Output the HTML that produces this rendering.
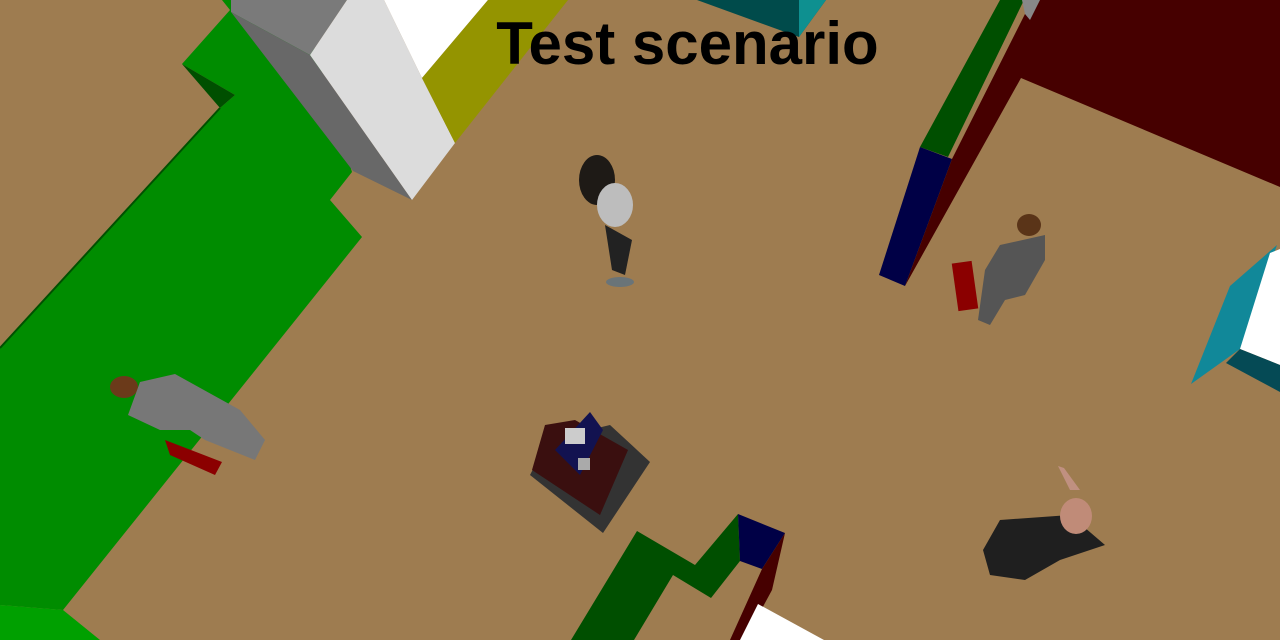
<!DOCTYPE html>
<html><head><style>
html,body{margin:0;padding:0;width:1280px;height:640px;overflow:hidden;background:#9e7c50}
svg{position:absolute;left:0;top:0}
.t{position:absolute;left:0;width:1375px;text-align:center;top:9px;font:bold 60px "Liberation Sans",sans-serif;color:#000;}
</style></head><body>
<svg width="1280" height="640" viewBox="0 0 1280 640">
<rect width="1280" height="640" fill="#9e7c50"/>
<polygon points="222,0 300,0 352,172 330,200 362,237 63,610 0,605 0,348 220,108 235,95 182,64 230,10" fill="#008c00"/>
<polygon points="182,64 235,95 220,108" fill="#004f00"/>
<polygon points="0,605 63,610 100,640 0,640" fill="#00a000"/>
<line x1="0" y1="348" x2="220" y2="108" stroke="#005000" stroke-width="2"/>
<polygon points="231,0 347,0 310,55 231,12" fill="#7a7a7a"/>
<polygon points="231,12 310,55 412,200 353,171" fill="#686868"/>
<polygon points="310,55 347,0 384,0 422,78 455,143 412,200" fill="#dcdcdc"/>
<polygon points="384,0 488,0 422,78" fill="#ffffff"/>
<polygon points="488,0 568,0 455,143 422,78" fill="#949400"/>
<polygon points="697,0 826,0 799,37" fill="#004b4b"/>
<polygon points="799,0 826,0 799,37" fill="#0e9090"/>
<polygon points="1000,0 1024,0 948,157 920,147" fill="#004f00"/>
<polygon points="920,147 952,159 905,286 879,275" fill="#000046"/>
<polygon points="1026,0 1280,0 1280,187 1021,78 905,286 952,159 1026,12" fill="#460000"/>
<polygon points="1022,0 1040,0 1030,20 1025,14" fill="#888"/>
<polygon points="1230,286 1277,245 1240,349 1191,384" fill="#118899"/>
<polygon points="1270,253 1280,249 1280,365 1240,349" fill="#ffffff"/>
<polygon points="1240,349 1280,365 1280,392 1226,363" fill="#054a55"/>
<polygon points="571,640 637,531 695,565 738,514 740,561 711,598 673,575 634,640" fill="#004f00"/>
<polygon points="738,514 785,533 762,569 740,561" fill="#000046"/>
<polygon points="785,533 772,590 745,640 730,640 762,569" fill="#460000"/>
<polygon points="758,604 824,640 740,640" fill="#ffffff"/>
<polygon points="530,475 548,440 610,425 650,462 603,533" fill="#333"/>
<polygon points="545,425 575,420 628,450 600,515 532,470" fill="#3a0f0f"/>
<polygon points="555,450 590,412 603,430 580,475" fill="#121250"/>
<rect x="565" y="428" width="20" height="16" fill="#ccc"/>
<rect x="578" y="458" width="12" height="12" fill="#aaa"/>
<ellipse cx="597" cy="180" rx="18" ry="25" fill="#1e1a16"/>
<ellipse cx="615" cy="205" rx="18" ry="22" fill="#bdbdbd"/>
<path d="M605 225 L612 270 L625 275 L632 240 Z" fill="#222"/>
<ellipse cx="620" cy="282" rx="14" ry="5" fill="#6a7478"/>
<ellipse cx="1029" cy="225" rx="12" ry="11" fill="#5a3418"/>
<path d="M1000 245 L1045 235 L1045 260 L1025 295 L1005 300 L990 325 L978 320 L985 270 Z" fill="#555"/>
<rect x="955" y="262" width="20" height="48" fill="#8b0000" transform="rotate(-8 965 286)"/>
<ellipse cx="124" cy="387" rx="14" ry="11" fill="#6b3a1a"/>
<path d="M140 382 L175 374 L240 410 L265 440 L255 460 L205 440 L190 430 L160 430 L128 415 Z" fill="#777"/>
<path d="M165 440 L222 462 L215 475 L170 455 Z" fill="#8b0000"/>
<path d="M1000 520 L1070 515 L1105 545 L1060 560 L1025 580 L990 575 L983 550 Z" fill="#1f1f1f"/>
<ellipse cx="1076" cy="516" rx="16" ry="18" fill="#c08b78"/>
<path d="M1058 466 L1070 490 L1080 490 L1064 468 Z" fill="#c09080"/>
</svg>
<div class="t">Test scenario</div>
</body></html>
